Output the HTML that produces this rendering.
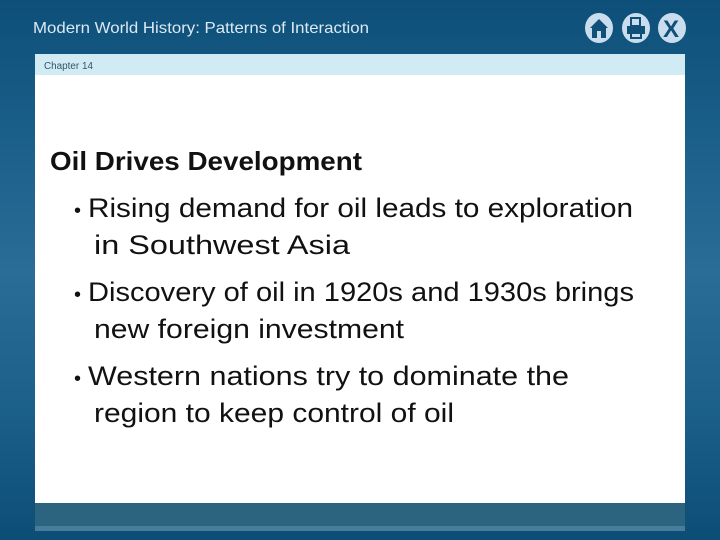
<!DOCTYPE html>
<html><head><meta charset="utf-8"><style>
html,body{margin:0;padding:0;width:720px;height:540px;overflow:hidden}
body{background:linear-gradient(to bottom,#0d4f78 0%,#1a5f8a 25%,#2a6d97 50%,#1c6189 75%,#0c4d76 100%)}
svg{position:absolute;left:0;top:0}
</style></head><body>
<svg width="720" height="540" xmlns="http://www.w3.org/2000/svg" font-family="Liberation Sans, sans-serif">
<rect x="35" y="54" width="650" height="21" fill="#d1ebf5"/>
<rect x="35" y="75" width="650" height="428" fill="#ffffff"/>
<rect x="35" y="503" width="650" height="24" fill="#2c6480"/>
<rect x="35" y="526" width="650" height="5" fill="#467d9a"/>
<text x="33" y="33" font-size="16" fill="#dbe9f4" textLength="336" lengthAdjust="spacingAndGlyphs">Modern World History: Patterns of Interaction</text>
<text x="44" y="69" font-size="10" fill="#33556a" textLength="49" lengthAdjust="spacingAndGlyphs">Chapter 14</text>
<g fill="#c9ddef">
<ellipse cx="599" cy="28" rx="14" ry="15"/>
<ellipse cx="636" cy="28" rx="14" ry="15"/>
<ellipse cx="672" cy="28" rx="14" ry="15"/>
</g>
<g fill="#0f4f78">
<path d="M590 28 L599 19 L608 28 L606 28 L606 38 L592 38 L592 28Z"/>
<rect x="597" y="31" width="4" height="7" fill="#c9ddef"/>
<rect x="631" y="18" width="9" height="8" fill="none" stroke="#0f4f78" stroke-width="2"/>
<rect x="627" y="26" width="18" height="8"/>
<rect x="631" y="32" width="10" height="6" fill="none" stroke="#0f4f78" stroke-width="2"/>
</g>
<text x="663" y="37" font-size="24" font-weight="bold" fill="#0f4f78">X</text>
<g fill="#111" font-size="27">
<text x="50" y="170" font-size="26" font-weight="bold" textLength="312" lengthAdjust="spacingAndGlyphs">Oil Drives Development</text>
<text x="74" y="217" font-size="20">•</text>
<text x="88" y="217" textLength="545" lengthAdjust="spacingAndGlyphs">Rising demand for oil leads to exploration</text>
<text x="94" y="254" textLength="256" lengthAdjust="spacingAndGlyphs">in Southwest Asia</text>
<text x="74" y="301" font-size="20">•</text>
<text x="88" y="301" textLength="546" lengthAdjust="spacingAndGlyphs">Discovery of oil in 1920s and 1930s brings</text>
<text x="94" y="338" textLength="310" lengthAdjust="spacingAndGlyphs">new foreign investment</text>
<text x="74" y="385" font-size="20">•</text>
<text x="88" y="385" textLength="481" lengthAdjust="spacingAndGlyphs">Western nations try to dominate the</text>
<text x="94" y="422" textLength="360" lengthAdjust="spacingAndGlyphs">region to keep control of oil</text>
</g>
</svg>
</body></html>
